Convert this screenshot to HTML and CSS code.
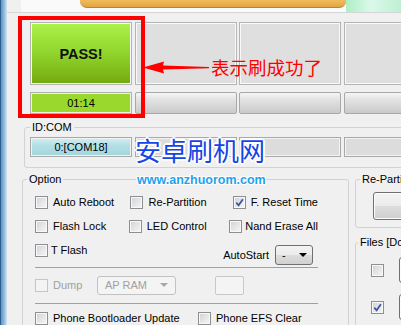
FILE: index.html
```html
<!DOCTYPE html>
<html lang="en">
<head>
    <meta charset="UTF-8">
    <meta name="viewport" content="width=device-width, initial-scale=1.0">
    <title>Odin</title>
    <link rel="stylesheet" href="styles.css">
</head>
<body>
<div class="window">
    <div class="frame"></div>

    <div class="app">
        <!-- top banner strip -->
        <div class="banner">
            <div class="banner-art">
                <div class="banner-orange"></div>
                <div class="banner-green"></div>
            </div>
        </div>

        <!-- status slots -->
        <div class="status">
            <div class="slot pass">PASS!</div>
            <div class="slot"></div>
            <div class="slot"></div>
            <div class="slot"></div>
            <div class="bar done">01:14</div>
            <div class="bar"></div>
            <div class="bar"></div>
            <div class="bar"></div>
        </div>

        <fieldset class="group idcom">
            <legend>ID:COM</legend>
            <div class="com-row">
                <div class="com active">0:[COM18]</div>
                <div class="com"></div>
                <div class="com"></div>
                <div class="com"></div>
            </div>
        </fieldset>

        <div class="lower">
            <fieldset class="group option">
                <legend>Option</legend>
                <div class="opt-body">
                    <div class="opt-row">
                        <label class="chk col1"><span class="box"></span>Auto Reboot</label>
                        <label class="chk col2"><span class="box"></span>Re-Partition</label>
                        <label class="chk"><span class="box checked"><svg width="9" height="9" viewBox="0 0 9 9"><path d="M1.3 4.6 L3.6 7.3 L7.9 1.2" fill="none" stroke="#3d54a0" stroke-width="1.7"/></svg></span>F. Reset Time</label>
                    </div>
                    <div class="opt-row">
                        <label class="chk col1"><span class="box"></span>Flash Lock</label>
                        <label class="chk col2"><span class="box"></span>LED Control</label>
                        <label class="chk"><span class="box tight"></span>Nand Erase All</label>
                    </div>
                    <div class="opt-row row3">
                        <label class="chk"><span class="box tight"></span>T Flash</label>
                        <div class="autostart">
                            <span>AutoStart</span>
                            <div class="combo small">
                                <span>-</span>
                                <span class="caret"></span>
                            </div>
                        </div>
                    </div>
                    <div class="sep"></div>
                    <div class="opt-row row4">
                        <label class="chk dump disabled"><span class="box"></span>Dump</label>
                        <div class="combo wide disabled">
                            <span>AP RAM</span>
                            <span class="caret"></span>
                        </div>
                        <div class="blank"></div>
                    </div>
                    <div class="sep sep2"></div>
                    <div class="opt-row row5">
                        <label class="chk boot"><span class="box"></span>Phone Bootloader Update</label>
                        <label class="chk"><span class="box"></span>Phone EFS Clear</label>
                    </div>
                </div>
            </fieldset>

            <div class="side">
                <fieldset class="group repart">
                    <legend>Re-Partition</legend>
                    <div class="btn big"></div>
                </fieldset>
                <fieldset class="group files">
                    <legend>Files [Download]</legend>
                    <div class="file-row">
                        <span class="box"></span>
                        <div class="btn"></div>
                    </div>
                    <div class="file-row">
                        <span class="box checked"><svg width="9" height="9" viewBox="0 0 9 9"><path d="M1.3 4.6 L3.6 7.3 L7.9 1.2" fill="none" stroke="#3d54a0" stroke-width="1.7"/></svg></span>
                        <div class="btn"></div>
                    </div>
                </fieldset>
            </div>
        </div>
    </div>

    <!-- annotation overlays -->
    <div class="mark"></div>
    <svg class="arrow" width="68" height="17" viewBox="0 0 68 17">
        <polygon points="0,8.5 21,2.5 20,6.5 66,8 66,9.2 20,10.5 21,14.5" fill="#ff0000"/>
    </svg>
    <div class="note">表示刷成功了</div>

    <div class="watermark">
        <div class="wm-cn">安卓刷机网</div>
        <div class="wm-url">www.anzhuorom.com</div>
    </div>
</div>
</body>
</html>
```

FILE: styles.css
```css
* {
    box-sizing: border-box;
}
body {
    margin: 0;
    background-color: #f0f0f0;
    font-family: "Liberation Sans", Arial, sans-serif;
    font-size: 11px;
    color: #000;
    overflow: hidden;
}
.window {
    position: relative;
    width: 401px;
    height: 325px;
    display: flex;
    overflow: hidden;
    background-color: #f0f0f0;
}
.frame {
    width: 7px;
    flex: none;
    background: linear-gradient(to right, #2c5f8e 0, #2c5f8e 1px, #5d95c4 1px, #8cbadf 4px, #bcd3e6 6px, #e2e8ee 7px);
}
.app {
    flex: 1;
    min-width: 0;
    display: flex;
    flex-direction: column;
}

/* banner */
.banner {
    height: 13px;
    padding-left: 14px;
    border-bottom: 1px solid #d6d6d6;
}
.banner-art {
    height: 12px;
    display: flex;
    padding-left: 59px;
    background-color: #fafafa;
}
.banner-orange {
    width: 266px;
    height: 8px;
    background: linear-gradient(#f1bb5c, #e2a543);
    border-bottom: 1px solid #b98133;
    border-radius: 0 0 7px 7px;
}
.banner-green {
    flex: 1;
    height: 12px;
    background: linear-gradient(to right, #aeeec4, #daf8ea 45%, #bff0d2);
}

/* status slots */
.status {
    display: grid;
    grid-template-columns: repeat(4, 102px);
    grid-template-rows: 63px 22px;
    column-gap: 2.5px;
    row-gap: 7px;
    margin: 9px 0 0 23px;
}
.slot {
    border: 1px solid #b4b4b4;
    background-color: #dfdfdf;
    box-shadow: inset 0 0 0 1px #f9f9f9;
}
.pass {
    display: flex;
    align-items: center;
    justify-content: center;
    background: linear-gradient(#acf24a, #90d42c 50%, #74aa10);
    font-weight: bold;
    font-size: 14.5px;
    color: #111;
}
.bar {
    border: 1px solid #a8a8a8;
    border-radius: 2px;
    background: linear-gradient(#f6f6f6, #e4e4e4 30%, #cacaca);
}
.bar.done {
    display: flex;
    align-items: center;
    justify-content: center;
    border-radius: 0;
    border-color: #b0b0b0;
    background: #9ad82e;
    box-shadow: inset 0 0 0 1px #eef4e4;
}

/* group boxes */
.group {
    margin: 0;
    padding: 0;
    min-width: 0;
    border: 1px solid #d2d2d2;
    border-radius: 3px;
}
.group legend {
    padding: 0 2px;
    line-height: 13px;
}
.idcom {
    margin: 6.5px -20px 0 17px;
    padding: 3.5px 0 10px 5px;
}
.com-row {
    display: grid;
    grid-template-columns: repeat(4, 102px);
    column-gap: 2.5px;
}
.com {
    height: 20px;
    border: 1px solid #a8a8a8;
    background-color: #dcdcdc;
    box-shadow: inset 0 0 0 1px #f3f3f3;
}
.com.active {
    display: flex;
    align-items: center;
    justify-content: center;
    background: linear-gradient(#d4eff3, #b3e0e5 40%, #a3d5db);
}

/* lower area */
.lower {
    display: flex;
    align-items: flex-start;
    gap: 6px;
    margin: 5px 0 0 15px;
}
.option {
    width: 327px;
    flex: none;
    padding: 10px 0 30px 12px;
}
.option legend {
    margin-left: -8px;
}
.opt-body {
    width: 283px;
}
.opt-row {
    display: flex;
    align-items: center;
    height: 13px;
    margin-bottom: 11px;
}
.chk {
    display: flex;
    align-items: center;
    line-height: 13px;
    white-space: nowrap;
}
.col1 { width: 97px; }
.col2 { width: 104px; }
.box {
    width: 13px;
    height: 13px;
    flex: none;
    margin-right: 5px;
    display: flex;
    align-items: center;
    justify-content: center;
    border: 1px solid #8e8f8f;
    background: linear-gradient(135deg, #cfd2d6, #f7f7f7);
    box-shadow: inset 0 0 0 1px #f8f8f8;
}
.box.tight {
    margin-right: 3px;
}
.row3 {
    height: 21px;
    align-items: flex-start;
    margin-bottom: 2px;
}
.autostart {
    display: flex;
    align-items: center;
    gap: 6px;
    margin: 1px 5px 0 auto;
}
.combo {
    display: flex;
    align-items: center;
    justify-content: space-between;
    border: 1px solid #707070;
    border-radius: 3px;
    background: linear-gradient(#f3f3f3, #ebebeb 50%, #dddddd 50%, #d0d0d0);
}
.combo.small {
    width: 38px;
    height: 20px;
    padding: 0 5px 0 6px;
}
.caret {
    width: 0;
    height: 0;
    border-left: 4px solid transparent;
    border-right: 4px solid transparent;
    border-top: 4px solid #000;
}
.sep {
    height: 1px;
    background-color: #a0a0a0;
}
.row4 {
    height: 20px;
    margin: 7px 0 8px;
}
.dump {
    width: 62px;
}
.disabled {
    color: #a0a0a0;
}
.disabled .box {
    border-color: #c5c5c5;
    background: #f4f4f4;
    box-shadow: none;
}
.combo.wide {
    width: 79px;
    height: 19px;
    padding: 0 7px 0 7px;
}
.combo.disabled {
    border-color: #c2c2c2;
    background: #f4f4f4;
}
.combo.disabled .caret {
    border-top-color: #a8a8a8;
}
.blank {
    width: 29px;
    height: 19px;
    margin-left: 39px;
    border: 1px solid #c8c8c8;
    border-radius: 2px;
    background-color: #f4f4f4;
}
.row5 {
    margin-top: 8px;
}
.boot {
    width: 163px;
}

/* right column */
.side {
    width: 90px;
    flex: none;
}
.repart {
    padding: 6px 0 7px 17px;
}
.repart legend,
.files legend {
    margin-left: -13px;
    white-space: nowrap;
}
.btn {
    height: 26px;
    border: 1px solid #707070;
    border-radius: 3px;
    background: linear-gradient(#f3f3f3, #ebebeb 50%, #dddddd 50%, #cfcfcf);
    box-shadow: inset 0 0 0 1px #fcfcfc;
    flex: 1;
}
.btn.big {
    height: 28px;
}
.files {
    margin-top: 8px;
    padding: 8px 0 10px 15px;
}
.file-row {
    display: flex;
    align-items: center;
    height: 26px;
    margin-bottom: 11px;
}
.file-row .box {
    margin-right: 15px;
}

/* overlays */
.mark {
    position: absolute;
    left: 18px;
    top: 16px;
    width: 127px;
    height: 102px;
    border: 4px solid #ff0000;
}
.arrow {
    position: absolute;
    left: 143px;
    top: 59px;
}
.note {
    position: absolute;
    left: 211px;
    top: 58px;
    font-family: "Noto Sans CJK SC", sans-serif;
    font-size: 18.5px;
    line-height: 19px;
    color: #ff0000;
}
.watermark {
    position: absolute;
    left: 135px;
    top: 135px;
}
.wm-cn {
    font-family: "Noto Sans CJK SC", sans-serif;
    font-size: 26px;
    line-height: 30px;
    color: #1446e6;
    text-shadow: 2px 0 0 #fff, -2px 0 0 #fff, 0 2px 0 #fff, 0 -2px 0 #fff, 1px 1px 0 #fff, -1px -1px 0 #fff, 1px -1px 0 #fff, -1px 1px 0 #fff;
}
.wm-url {
    margin: 8px 0 0 2px;
    font-weight: bold;
    font-size: 12.5px;
    line-height: 14px;
    color: #1ea2ee;
    text-shadow: 1px 0 0 #fff, -1px 0 0 #fff, 0 1px 0 #fff, 0 -1px 0 #fff, 1px 1px 1px #fff, -1px -1px 1px #fff;
}
```
